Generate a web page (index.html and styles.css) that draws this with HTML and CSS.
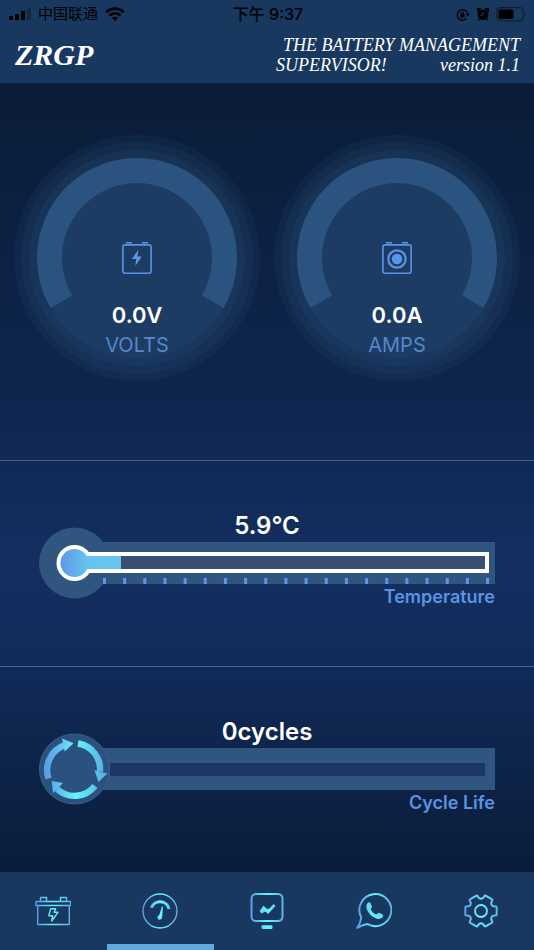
FILE: index.html
```html
<!DOCTYPE html>
<html lang="en">
<head>
<meta charset="utf-8">
<meta name="viewport" content="width=device-width, initial-scale=1">
<title>ZRGP Battery Management Supervisor</title>
<link rel="stylesheet" href="styles.css">
</head>
<body>
<header class="top">
  <div class="status">
    <div class="status-left">
      <svg width="22" height="12" viewBox="0 0 22 12" aria-hidden="true">
        <rect x="0" y="8" width="4" height="4" rx="1"/>
        <rect x="6" y="6" width="4" height="6" rx="1"/>
        <rect x="12" y="3" width="4" height="9" rx="1"/>
        <rect x="18" y="0" width="4" height="12" rx="1" opacity=".25"/>
      </svg>
      <span class="carrier" lang="zh-CN">中国联通</span>
      <svg width="20" height="14" viewBox="0 0 20 14" aria-hidden="true">
        <path d="M1.3 5.2a12.4 12.4 0 0 1 17.4 0" fill="none" stroke="#000" stroke-width="2.8"/>
        <path d="M4.5 8.5a7.8 7.8 0 0 1 11 0" fill="none" stroke="#000" stroke-width="2.6"/>
        <path d="M7 11a4.2 4.2 0 0 1 6 0l-3 3z"/>
      </svg>
    </div>
    <span class="clock" lang="zh-CN">下午 9:37</span>
    <div class="status-right">
      <svg width="14" height="13" viewBox="0 0 14 13" aria-hidden="true">
        <path d="M10.6 10.4A5.3 5.3 0 1 1 11.7 6" fill="none" stroke="#000" stroke-width="1.2"/>
        <path d="M9.8 5.8h4l-2 2.8z"/>
        <rect x="4" y="6" width="4.6" height="3.4" rx=".5"/>
        <path d="M5 6V5a1.3 1.3 0 0 1 2.6 0v1" fill="none" stroke="#000" stroke-width=".9"/>
      </svg>
      <svg width="12" height="13" viewBox="0 0 12 13" aria-hidden="true">
        <circle cx="6" cy="6.8" r="5.4"/>
        <path d="M.3 3.6A2 2 0 0 1 3.6.8zM11.7 3.6A2 2 0 0 0 8.4.8zM2.4 10.6l-1 1.8M9.6 10.6l1 1.8" stroke="#000" stroke-width="1.2"/>
        <path d="M6 4v3.3H3.4" fill="none" stroke="#18385f" stroke-width="1"/>
      </svg>
      <svg width="31" height="15" viewBox="0 0 31 15" aria-hidden="true">
        <rect x=".7" y=".7" width="26.6" height="13.2" rx="3.6" fill="none" stroke="#000" stroke-opacity=".45" stroke-width="1.2"/>
        <rect x="2.5" y="2.5" width="15" height="9.6" rx="1.8"/>
        <path d="M29 5.2q2 2 0 4z" opacity=".5"/>
      </svg>
    </div>
  </div>
  <div class="brand">
    <h1 class="logo">ZRGP</h1>
    <p class="tagline">
      <span class="tagline-top">THE BATTERY MANAGEMENT</span>
      <span class="tagline-row"><span>SUPERVISOR!</span><span>version 1.1</span></span>
    </p>
  </div>
</header>

<main class="panels">
  <section class="panel gauges">
    <div class="gauge">
      <svg class="dial" viewBox="0 0 246 246" aria-hidden="true">
        <g class="halo">
          <circle cx="123" cy="123" r="123"/><circle cx="123" cy="123" r="116"/><circle cx="123" cy="123" r="108"/>
        </g>
        <circle class="face" cx="123" cy="123" r="100"/>
        <path class="arc" d="M47.2 166.7a87.5 87.5 0 1 1 151.6 0"/>
      </svg>
      <div class="reading">
        <svg class="cell" width="30" height="34" viewBox="0 0 30 34" aria-hidden="true">
          <rect x=".9" y="3.9" width="28.2" height="28.4" rx="2.2" fill="none" stroke="#5b93e6" stroke-width="1.6"/>
          <path d="M4 1h6v1.6H4zM20 1h6v1.6h-6z"/>
          <path d="M16.4 8.6 9.8 18h4.4l-.9 7 6.5-9.4h-4.3z"/>
        </svg>
        <strong class="value">0.0V</strong>
        <span class="unit">VOLTS</span>
      </div>
    </div>
    <div class="gauge">
      <svg class="dial" viewBox="0 0 246 246" aria-hidden="true">
        <g class="halo">
          <circle cx="123" cy="123" r="123"/><circle cx="123" cy="123" r="116"/><circle cx="123" cy="123" r="108"/>
        </g>
        <circle class="face" cx="123" cy="123" r="100"/>
        <path class="arc" d="M47.2 166.7a87.5 87.5 0 1 1 151.6 0"/>
      </svg>
      <div class="reading">
        <svg class="cell" width="30" height="34" viewBox="0 0 30 34" aria-hidden="true">
          <rect x=".9" y="3.9" width="28.2" height="28.4" rx="2.2" fill="none" stroke="#5b93e6" stroke-width="1.6"/>
          <path d="M4 1h6v1.6H4zM20 1h6v1.6h-6z"/>
          <circle cx="15" cy="18" r="8.7" fill="none" stroke="#5b93e6" stroke-width="2.2"/>
          <circle cx="15" cy="18" r="5.3"/>
        </svg>
        <strong class="value">0.0A</strong>
        <span class="unit">AMPS</span>
      </div>
    </div>
  </section>

  <section class="panel scale">
    <strong class="scale-value">5.9°C</strong>
    <svg class="bar" viewBox="0 0 456 42" aria-hidden="true">
      <defs>
        <linearGradient id="bulb" gradientUnits="userSpaceOnUse" x1="21" y1="0" x2="50" y2="0">
          <stop offset="0" stop-color="#5f97e8"/><stop offset="1" stop-color="#66c5ee"/>
        </linearGradient>
      </defs>
      <path class="trough" d="M35 0h421v42H35z"/>
      <circle class="trough" cx="35.5" cy="21" r="35.5"/>
      <circle cx="35.5" cy="21" r="18" fill="#fff"/>
      <path d="M35 10h415v21H35z" fill="#fff"/>
      <path d="M48 14h398v13H48z" fill="#375073"/>
      <circle cx="35.5" cy="21" r="14" fill="url(#bulb)"/>
      <path d="M35 14h47v13H35z" fill="url(#bulb)"/>
      <path d="M64 39h387" stroke="#5f97e8" stroke-width="6" stroke-dasharray="3 17.16"/>
    </svg>
    <span class="scale-label">Temperature</span>
  </section>

  <section class="panel scale">
    <strong class="scale-value">0cycles</strong>
    <svg class="bar" viewBox="0 0 456 42" aria-hidden="true">
      <defs>
        <linearGradient id="ring" gradientUnits="userSpaceOnUse" x1="8" y1="0" x2="66" y2="0">
          <stop offset="0" stop-color="#5a9fe6"/><stop offset=".5" stop-color="#68f2fb"/><stop offset="1" stop-color="#55aee0"/>
        </linearGradient>
      </defs>
      <path class="trough" d="M35 0h421v42H35z"/>
      <path d="M71 15h375v13H71z" fill="#1b3763"/>
      <circle cx="35.5" cy="21" r="35" fill="#2a527f" stroke="#3a6088"/>
      <g fill="none" stroke="url(#ring)" stroke-width="6.4">
        <path d="M39-4.500A26 26 0 0 1 61 23.500"/>
        <path d="M56 38A26 26 0 0 1 18 41"/>
        <path d="M9.500 30.500A26.500 26.500 0 0 1 26-3"/>
      </g>
      <path d="M55.500 22.300 68.500 25.500 59.500 34zM12.700 33 24 35 14 45zM34.500-4.700 23-9.500 25.700 3.500z" fill="url(#ring)"/>
    </svg>
    <span class="scale-label">Cycle Life</span>
  </section>
</main>

<nav class="tabs" aria-label="Main">
  <a class="tab" href="#battery" aria-label="Battery">
    <svg class="icon" viewBox="0 0 36 36" aria-hidden="true">
      <defs>
        <linearGradient id="glow" gradientUnits="userSpaceOnUse" x1="0" y1="0" x2="36" y2="0">
          <stop offset="0" stop-color="#5b93e6"/><stop offset=".5" stop-color="#66f4fa"/><stop offset="1" stop-color="#5bade6"/>
        </linearGradient>
      </defs>
      <g class="line thin">
        <path d="M5.500 8.500v-4h6v4M25.500 8.500v-4h6v4M1 8.500h34.500v4H1zM2.700 12.500h31.600v19H2.700z"/>
        <path d="M15.700 15.700h5l-1.600 3.600H23L16.700 28l.9-5.200h-3.900z"/>
      </g>
    </svg>
  </a>
  <a class="tab active" href="#gauges" aria-label="Gauges" aria-current="page">
    <svg class="icon" viewBox="0 0 36 36" aria-hidden="true">
      <circle class="line thin" cx="18" cy="18" r="17"/>
      <path class="line thick" d="M9.300 14.800a9.200 9.200 0 0 1 17.700 1.200"/>
      <path class="solid" d="M19.900 13.500h1.100l-.8 10.300a2.400 2.400 0 1 1-2.900-1.900z"/>
    </svg>
  </a>
  <a class="tab" href="#monitor" aria-label="Monitor">
    <svg class="icon" viewBox="0 0 36 36" aria-hidden="true">
      <rect class="line" x="2.5" y="1" width="31" height="27" rx="4.5"/>
      <path class="solid" d="m10.500 18 4-5.300 3.500 3.300 2.500-.5 4-4.500 2 2-7.500 8-2.500-2.500-4 2z"/>
      <rect class="solid" x="12.5" y="32.3" width="11" height="3.7" rx="1.2"/>
    </svg>
  </a>
  <a class="tab" href="#whatsapp" aria-label="WhatsApp">
    <svg class="icon" viewBox="0 0 36 36" aria-hidden="true">
      <path class="line" d="M5.200 24.500A16 16 0 1 1 11.500 31Q7 31.500 1.200 34.800 4.700 30 5.200 24.500z"/>
      <path class="solid" d="M11.200 10.600c1.500-1.900 2.600-1.700 3.400-.2l1.300 3c.4 1.300-1.500 1.800-1.100 2.900.9 2.500 3 4.500 5.200 5.200 1.100.4 1.800-2 3-1.700l3.300 1.500c1.500.8 1.200 1.800.3 2.900-1.400 1.700-3.700 2.200-6.300 1.200-4.700-1.800-8.100-5.200-9.600-9.200-.7-2-.6-4.200.5-5.600z"/>
    </svg>
  </a>
  <a class="tab" href="#settings" aria-label="Settings">
    <svg class="icon" viewBox="0 0 36 36" aria-hidden="true">
      <path class="line" d="M13 2.800Q14.300 2 14.900 3.600 16 5.800 18 5.800T21.100 3.600Q21.700 2 23 2.800L28.700 6.100Q30 6.800 28.900 8.100 27.600 10.200 28.600 11.900T32 13.500Q33.700 13.200 33.700 14.700V21.300Q33.700 22.800 32 22.500 29.600 22.400 28.600 24.100T28.900 27.900Q30 29.200 28.700 29.900L23 33.200Q21.700 34 21.100 32.400 20 30.200 18 30.200T14.900 32.400Q14.300 34 13 33.200L7.300 29.900Q6 29.200 7.100 27.900 8.400 25.800 7.400 24.100T4 22.500Q2.300 22.800 2.300 21.300V14.700Q2.300 13.200 4 13.500 6.400 13.600 7.400 11.900T7.100 8.100Q6 6.800 7.300 6.100z"/>
      <circle class="line" cx="18" cy="18" r="6"/>
    </svg>
  </a>
</nav>
</body>
</html>
```
FILE: styles.css
```css
* {
  box-sizing: border-box;
}

body {
  margin: 0;
  min-height: 100vh;
  display: flex;
  flex-direction: column;
  background: #0a1c3a;
  color: #fff;
  font-family: Inter, "Noto Sans CJK SC", sans-serif;
}

h1,
p {
  margin: 0;
}

/* Header */
.top {
  background: #18385f;
  padding-bottom: 8px;
}

.status {
  display: grid;
  grid-template-columns: 1fr auto 1fr;
  align-items: center;
  height: 28px;
  padding: 0 7px 0 9px;
  color: #000;
  font-size: 16px;
  line-height: 24px;
}

.status-left,
.status-right {
  display: flex;
  align-items: center;
  gap: 7px;
}

.status-right {
  justify-content: flex-end;
}

.carrier {
  font-size: 15px;
}

.clock {
  font-weight: 500;
}

.brand {
  display: flex;
  justify-content: space-between;
  padding: 7px 14px 0 15px;
  font-family: "Liberation Serif", serif;
  font-style: italic;
}

.logo {
  font-size: 30px;
  line-height: 40px;
}

.tagline {
  display: flex;
  flex-direction: column;
  min-width: 244px;
  font-size: 18px;
  line-height: 20px;
}

.tagline-top {
  text-align: right;
}

.tagline-row {
  display: flex;
  justify-content: space-between;
}

/* Panels */
.panels {
  flex: 1;
  display: flex;
  flex-direction: column;
  background: linear-gradient(#0a1c38, #0f254e 40%, #132e60 60%, #122c5c 70%, #0a1c3a);
}

.panel + .panel {
  border-top: 1px solid #4a628c;
}

.gauges {
  flex: 1;
  display: flex;
  gap: 14px;
  padding: 52px 14px 79px;
}

.gauge {
  flex: 1;
  display: grid;
  align-items: start;
}

.dial,
.reading {
  grid-area: 1 / 1;
}

.dial {
  width: 100%;
}

.halo {
  fill: #3a6a92;
  fill-opacity: 0.1;
}

.face {
  fill: #1d3c63;
}

.arc {
  fill: none;
  stroke: #2a547f;
  stroke-width: 25;
}

.reading {
  align-self: center;
  display: flex;
  flex-direction: column;
  align-items: center;
  padding-top: 84px;
}

.cell {
  fill: #5b93e6;
}

.value {
  margin-top: 24px;
  font-size: 22px;
  font-weight: 600;
  line-height: 32px;
}

.unit {
  color: #5686cb;
  font-size: 20px;
  line-height: 28px;
}

.scale {
  display: flex;
  flex-direction: column;
  padding: 48px 39px 56px;
}

.scale-value {
  font-size: 24px;
  font-weight: 600;
  line-height: 33px;
  text-align: center;
}

.bar {
  width: 100%;
  overflow: visible;
}

.trough {
  fill: #30567f;
}

.scale-label {
  color: #5b93e2;
  font-size: 18px;
  font-weight: 600;
  line-height: 26px;
  text-align: right;
}

/* Tabs */
.tabs {
  display: flex;
  background: #18385f;
}

.tab {
  flex: 1;
  display: flex;
  justify-content: center;
  padding: 21px 0 15px;
  border-bottom: 6px solid transparent;
}

.tab.active {
  border-bottom-color: #5fa9dd;
}

.icon {
  width: 36px;
  height: 36px;
}

.line {
  fill: none;
  stroke: url(#glow);
  stroke-width: 2;
  stroke-linejoin: round;
}

.thin {
  stroke-width: 1.4;
}

.thick {
  stroke-width: 3;
}

.solid {
  fill: url(#glow);
}
```
